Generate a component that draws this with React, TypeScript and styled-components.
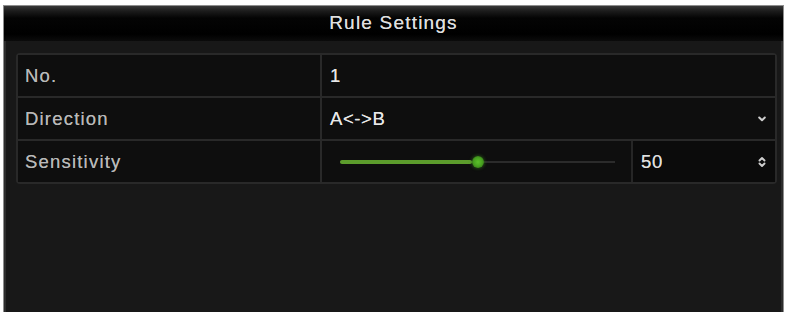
import React from "react";
import styled, { createGlobalStyle } from "styled-components";

const Global = createGlobalStyle`
  html, body { margin: 0; padding: 0; background: #ffffff; }
  body { font-family: "Liberation Sans", Arial, sans-serif; }
`;

const Page = styled.div`
  padding: 5px 3px 0 3px;
  height: 312px;
  box-sizing: border-box;
  overflow: hidden;
`;

const Panel = styled.div`
  height: 320px;
  border: 1px solid #8e8e8e;
  border-bottom: none;
  background: #181818;
  box-shadow: inset 2px 0 0 #2c2c2c, inset -2px 0 0 #2c2c2c;
  display: flex;
  flex-direction: column;
`;

const TitleBar = styled.div`
  height: 35px;
  flex: none;
  display: flex;
  align-items: center;
  justify-content: center;
  background: linear-gradient(#383838 0px, #1c1c1c 5px, #040404 12px, #000 28px, #0b0b0b 35px);
  color: #e0e0e0;
  font-size: 19px;
  letter-spacing: 1.2px;
  text-shadow: 0 0 0.6px rgba(230, 230, 230, 0.8);
  padding-bottom: 2px;
  box-sizing: border-box;
`;

const Body = styled.div`
  padding: 12px 6px 0 12px;
`;

const Table = styled.div`
  display: grid;
  grid-template-columns: 302px 1fr;
  grid-auto-rows: 41px;
  gap: 2px;
  padding: 2px;
  background: #292929;
  border-radius: 4px;
`;

const Cell = styled.div<{ $value?: boolean }>`
  background: #0e0e0e;
  display: flex;
  align-items: center;
  padding-left: ${(p) => (p.$value ? "8px" : "7px")};
  padding-top: 1px;
  color: ${(p) => (p.$value ? "#e8e8e8" : "#b9b9b9")};
  font-size: 18.5px;
  letter-spacing: ${(p) => (p.$value ? "0.6px" : "1.2px")};
  text-shadow: 0 0 0.6px ${(p) => (p.$value ? "rgba(232,232,232,0.8)" : "rgba(185,185,185,0.8)")};
  position: relative;
  box-sizing: border-box;
`;

const SplitCell = styled.div`
  background: #0e0e0e;
  display: flex;
  align-items: stretch;
`;

const SliderArea = styled.div`
  flex: 1;
  display: flex;
  align-items: center;
  padding: 0 16px 0 18px;
`;

const Track = styled.div`
  position: relative;
  flex: 1;
  height: 2px;
  background: #2b2b2b;
`;

const Fill = styled.div`
  position: absolute;
  left: 0;
  top: -1px;
  height: 4px;
  background: #5c9c2c;
  border-radius: 2px;
`;

const Knob = styled.div`
  position: absolute;
  top: 50%;
  width: 12px;
  height: 12px;
  margin: -6px 0 0 -6px;
  border-radius: 50%;
  background: radial-gradient(circle at 50% 50%, #5bc02a 0, #47a11f 50%, #2a5a16 100%);
  box-shadow: 0 0 3px 1px rgba(60, 140, 30, 0.4);
`;

const NumberBox = styled.div`
  width: 144px;
  flex: none;
  border-left: 2px solid #262626;
  background: #0b0b0b;
  display: flex;
  align-items: center;
  padding-left: 8px;
  padding-top: 1px;
  color: #e0e0e0;
  font-size: 18.5px;
  letter-spacing: 0.6px;
  text-shadow: 0 0 0.6px rgba(224, 224, 224, 0.8);
  position: relative;
  box-sizing: border-box;
`;

const Indicator = styled.svg`
  position: absolute;
  right: 9px;
  top: 50%;
  transform: translateY(-50%);
`;

const ChevronDown = () => (
  <Indicator width="8" height="6" viewBox="0 0 8 6">
    <path d="M1.2 1.5 L4 4.3 L6.8 1.5" fill="none" stroke="#cfcfcf" strokeWidth="2" strokeLinecap="round" strokeLinejoin="round" />
  </Indicator>
);

const Spinner = () => (
  <Indicator width="8" height="12" viewBox="0 0 8 12">
    <path d="M1.5 4.5 L4 2 L6.5 4.5" fill="none" stroke="#cfcfcf" strokeWidth="1.9" strokeLinecap="round" strokeLinejoin="round" />
    <path d="M1.5 7.5 L4 10 L6.5 7.5" fill="none" stroke="#cfcfcf" strokeWidth="1.9" strokeLinecap="round" strokeLinejoin="round" />
  </Indicator>
);

const Slider = ({ value }: { value: number }) => (
  <SliderArea>
    <Track>
      <Fill style={{ width: `calc(${value}% - 6px)` }} />
      <Knob style={{ left: `${value}%` }} />
    </Track>
  </SliderArea>
);

export default function App() {
  const sensitivity = 50;
  return (
    <>
      <Global />
      <Page>
        <Panel>
          <TitleBar>Rule Settings</TitleBar>
          <Body>
            <Table>
              <Cell>No.</Cell>
              <Cell $value>1</Cell>
              <Cell>Direction</Cell>
              <Cell $value>
                A&lt;-&gt;B
                <ChevronDown />
              </Cell>
              <Cell>Sensitivity</Cell>
              <SplitCell>
                <Slider value={sensitivity} />
                <NumberBox>
                  {sensitivity}
                  <Spinner />
                </NumberBox>
              </SplitCell>
            </Table>
          </Body>
        </Panel>
      </Page>
    </>
  );
}
